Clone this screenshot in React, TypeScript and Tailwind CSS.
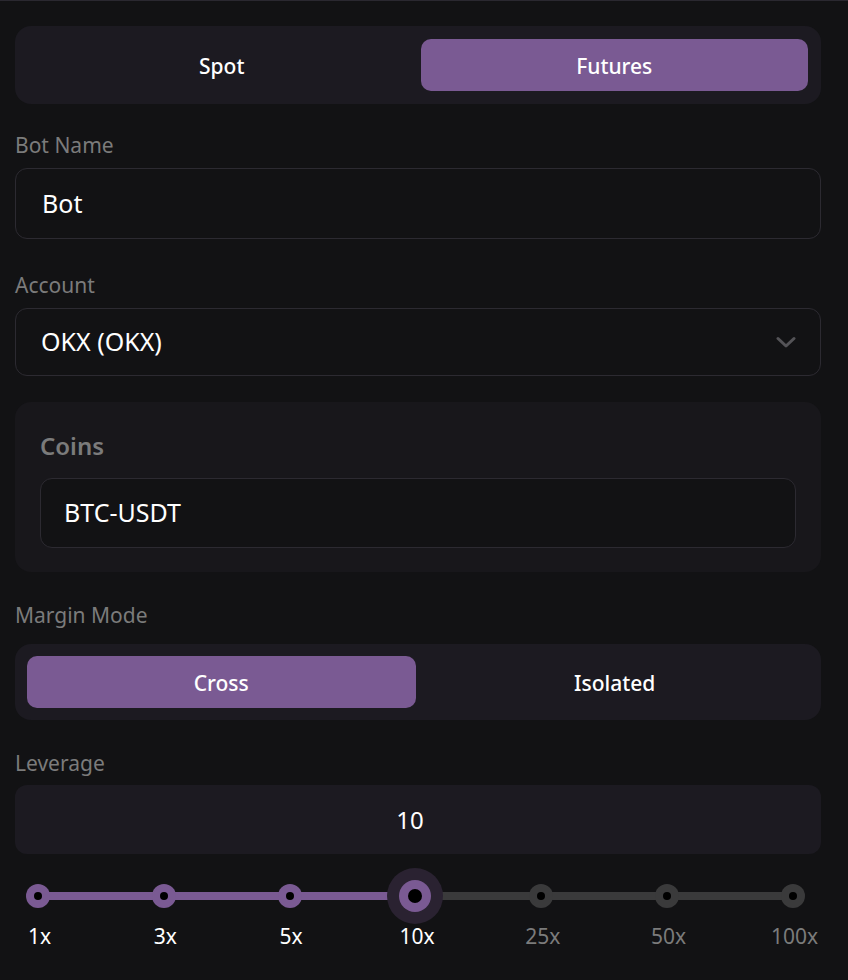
const marks = ['1x', '3x', '5x', '10x', '25x', '50x', '100x'];
const activeIndex = 3;

function Segmented({
  options,
  active,
  height,
  pad,
}: {
  options: string[];
  active: number;
  height: string;
  pad: string;
}) {
  return (
    <div className={`grid grid-cols-2 gap-[5px] rounded-2xl bg-[#1c1a21] ${height} ${pad}`}>
      {options.map((o, i) => (
        <button
          key={o}
          className={`flex items-center justify-center rounded-[10px] pt-[3px] text-[21px] font-medium text-white ${
            i === active ? 'bg-[#7a5a93]' : ''
          }`}
        >
          {o}
        </button>
      ))}
    </div>
  );
}

function Label({ children, className = '' }: { children: string; className?: string }) {
  return <div className={`text-[21px] leading-[28px] text-[#7b7b7b] ${className}`}>{children}</div>;
}

export default function App() {
  return (
    <div
      className="min-h-[980px] border-t border-[#2a2830] bg-[#121214] pl-[15px] pr-[27px] pt-[25px]"
      style={{ fontFamily: '"Noto Sans", "Open Sans", sans-serif' }}
    >
      <Segmented options={['Spot', 'Futures']} active={1} height="h-[78px]" pad="p-[13px]" />

      <Label className="mt-[27px]">Bot Name</Label>
      <div className="mt-[9px] flex h-[71px] items-center rounded-xl border border-[#2c2a31] px-[26px] text-[25px] text-white">
        Bot
      </div>

      <Label className="mt-[32px]">Account</Label>
      <div className="mt-[9px] flex h-[68px] items-center justify-between rounded-xl border border-[#2c2a31] pl-[25px] pr-[24px] text-[25px] text-white">
        <span>OKX (OKX)</span>
        <svg width="20" height="13" viewBox="0 0 20 13" fill="none">
          <polyline
            points="2,2.5 10,10 18,2.5"
            stroke="#545357"
            strokeWidth="3"
            strokeLinecap="round"
            strokeLinejoin="round"
          />
        </svg>
      </div>

      <div className="mt-[26px] rounded-2xl bg-[#18171b] px-[25px] pb-[24px] pt-[28px]">
        <div className="text-[24px] font-semibold leading-[32px] text-[#7b7b7b]">Coins</div>
        <div className="mt-[16px] flex h-[70px] items-center rounded-xl border border-[#2c2a31] bg-[#121214] px-[23px] text-[25px] text-white">
          BTC-USDT
        </div>
      </div>

      <Label className="mt-[29px]">Margin Mode</Label>
      <div className="mt-[15px]">
        <Segmented options={['Cross', 'Isolated']} active={0} height="h-[76px]" pad="p-[12px]" />
      </div>

      <Label className="mt-[29px]">Leverage</Label>
      <div className="mt-[8px] flex h-[69px] items-center justify-center rounded-xl bg-[#1c1a21] pr-[16px] text-[24px] text-white">
        10
      </div>

      <div className="relative ml-[11px] mr-[16px] mt-[14px] h-[56px]">
        <div className="absolute left-[12px] right-[12px] top-1/2 h-[8px] -translate-y-1/2 bg-[#3a3a3b]">
          <div className="h-full w-1/2 bg-[#7a5a93]" />
        </div>
        <div className="relative flex h-full items-center justify-between">
          {marks.map((m, i) => (
            <div key={m} className="flex w-[24px] items-center justify-center">
              {i === activeIndex ? (
                <div className="flex h-[56px] w-[56px] shrink-0 items-center justify-center rounded-full bg-[#2a2231]">
                  <div className="flex h-[32px] w-[32px] items-center justify-center rounded-full bg-[#7a5a93]">
                    <div className="h-[14px] w-[14px] rounded-full bg-black" />
                  </div>
                </div>
              ) : (
                <div
                  className={`flex h-[24px] w-[24px] shrink-0 items-center justify-center rounded-full ${
                    i < activeIndex ? 'bg-[#7a5a93]' : 'bg-[#3a3a3b]'
                  }`}
                >
                  <div className="h-[8px] w-[8px] rounded-full bg-black" />
                </div>
              )}
            </div>
          ))}
        </div>
      </div>
      <div className="ml-[11px] mr-[16px] -mt-[2px] flex justify-between">
        {marks.map((m, i) => (
          <div key={m} className="flex w-[24px] justify-center">
            <span
              className={`whitespace-nowrap pl-[3px] text-[21px] leading-[28px] ${
                i <= activeIndex ? 'text-white' : 'text-[#7b7b7b]'
              }`}
            >
              {m}
            </span>
          </div>
        ))}
      </div>
    </div>
  );
}
